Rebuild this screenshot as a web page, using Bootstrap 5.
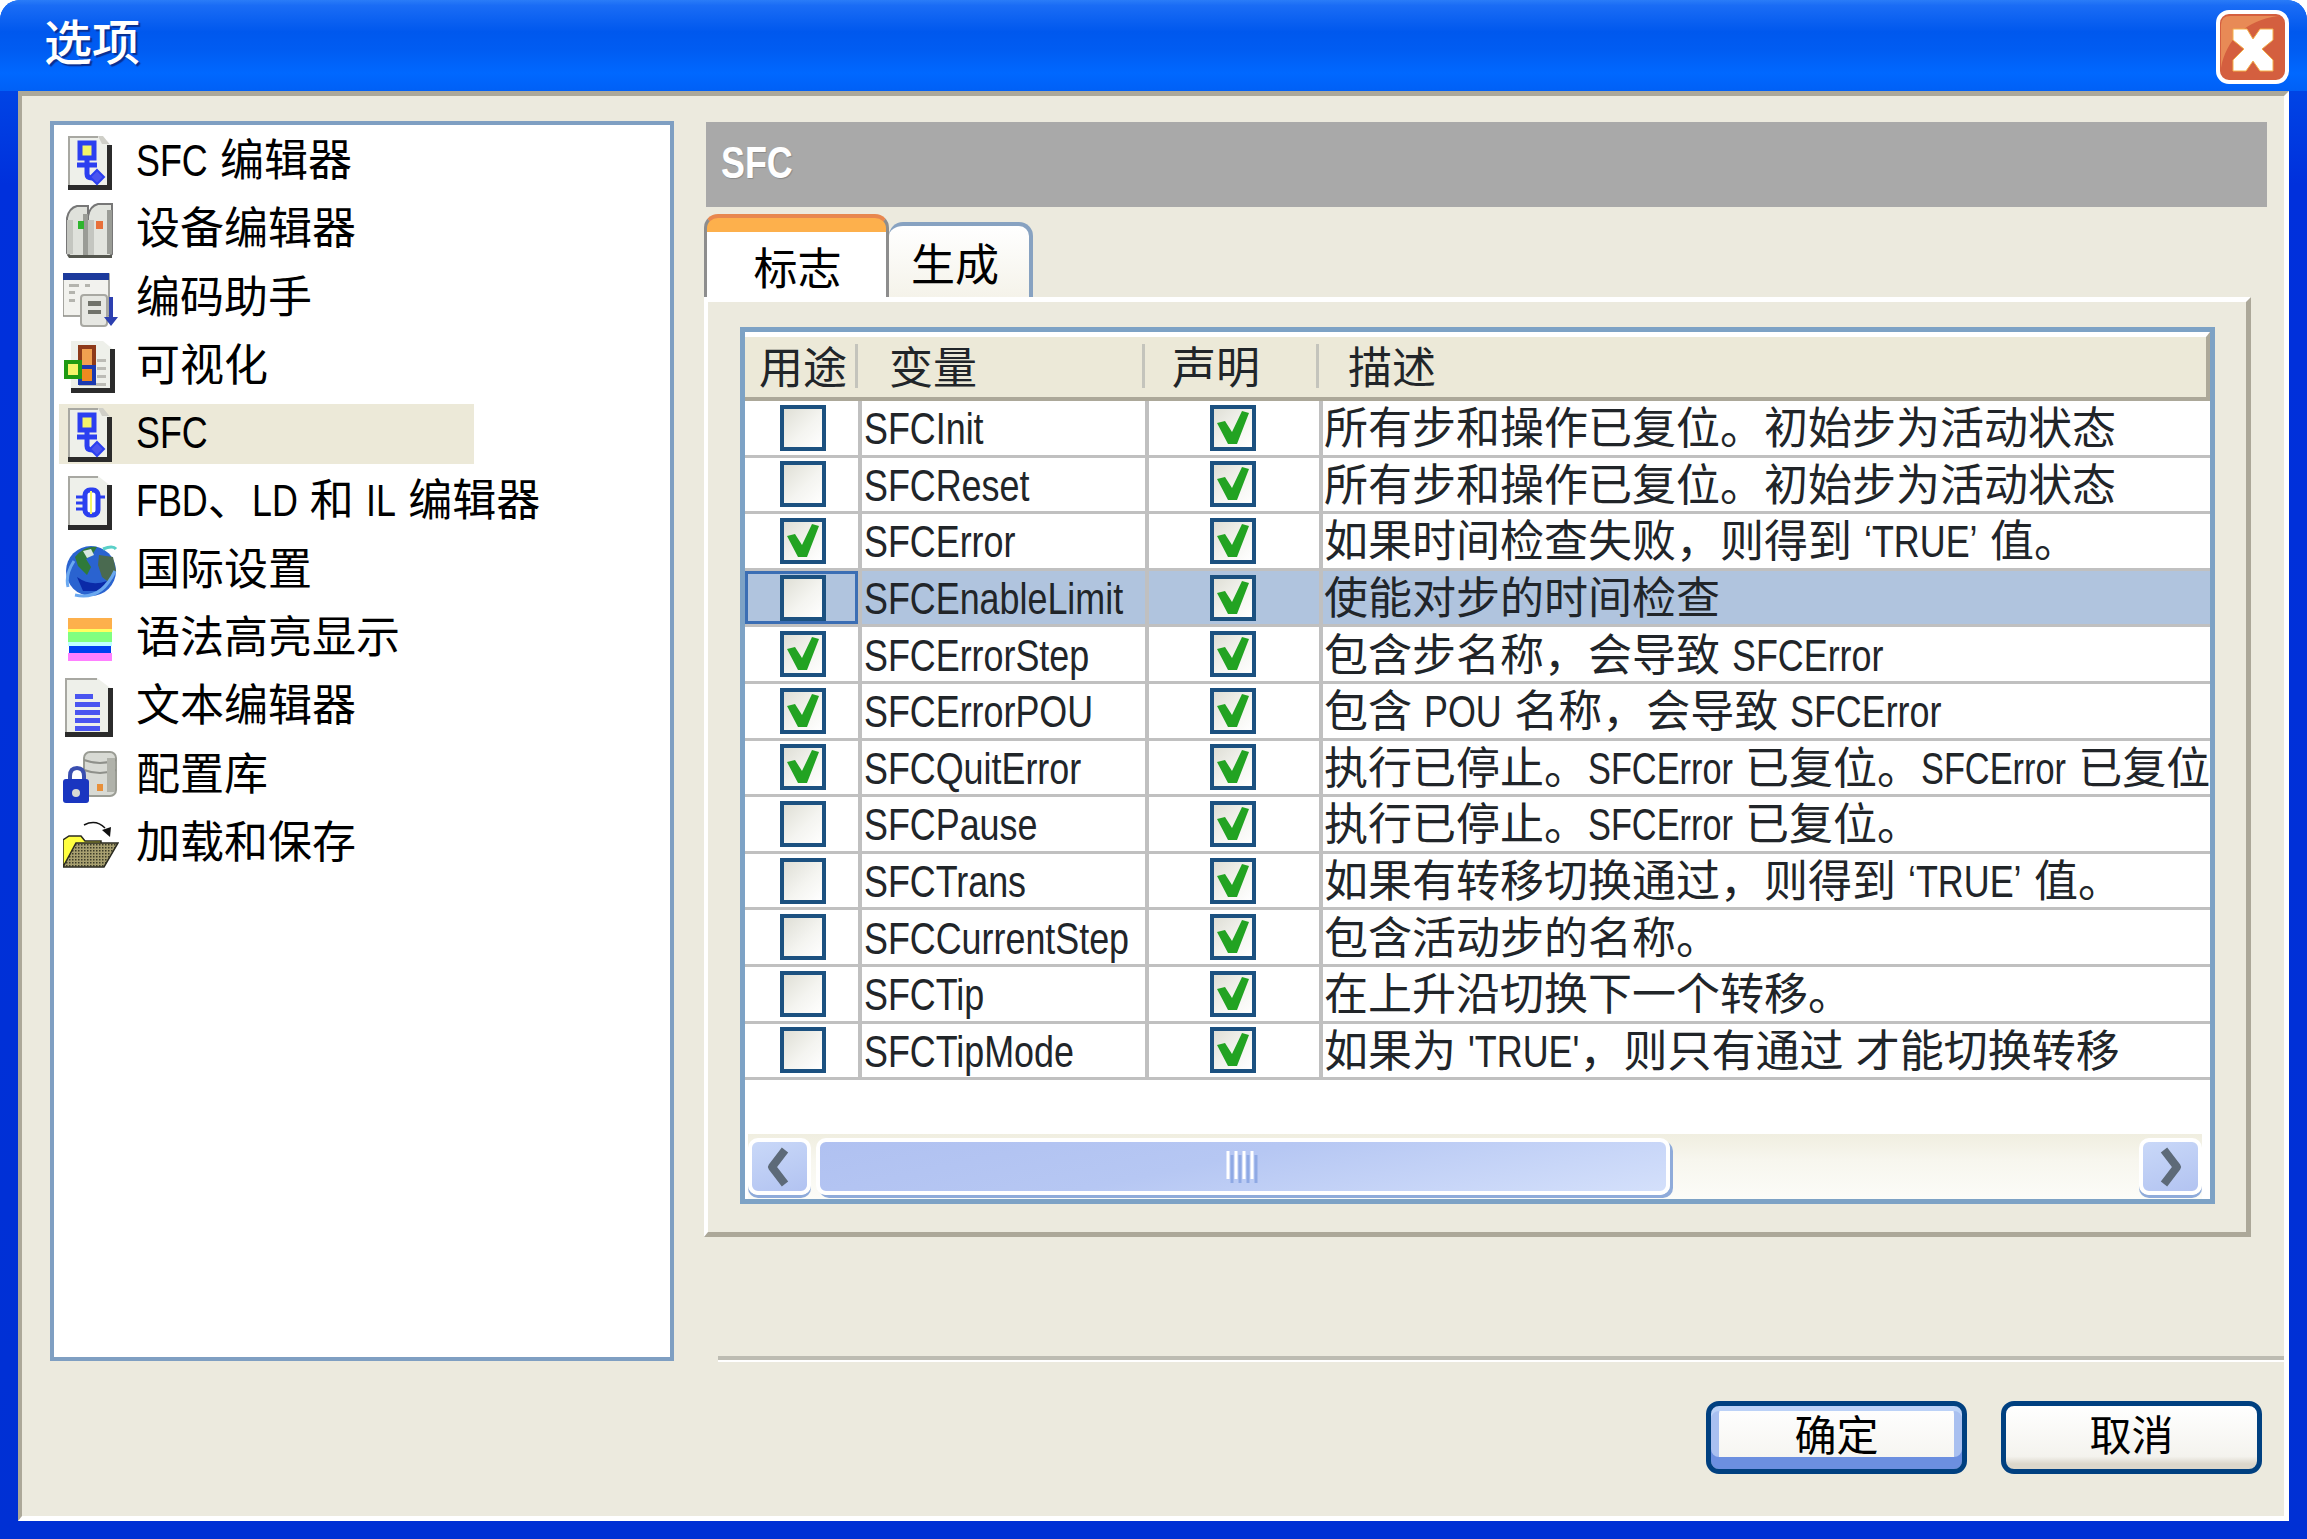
<!DOCTYPE html>
<html lang="zh-CN">
<head>
  <meta charset="UTF-8">
  <title>选项</title>
  <link href="https://cdn.jsdelivr.net/npm/bootstrap@5.3.3/dist/css/bootstrap.min.css" rel="stylesheet">
  <style>
    body {
      margin: 0;
      background: #fff;
      color: #000;
      font-family: "Liberation Sans", "Noto Sans CJK SC", sans-serif;
      font-size: 44px;
      line-height: 1;
    }

    /* latin in the reference is narrower than Arial, the script below closes the gap */
    .lat {
      display: inline-block;
      transform: scaleX(.815);
      transform-origin: 0 50%;
    }

    .lat-tight {
      transform: scaleX(.78);
    }

    .dlg {
      width: 2307px;
      height: 1539px;
      overflow: hidden;
      border-radius: 20px 20px 0 0;
      background: linear-gradient(180deg, #0058ee 0, #0030dc 12%, #0030d4 100%);
    }

    .dlg-title {
      height: 91px;
      padding: 0 18px 0 44px;
      background: linear-gradient(180deg, #2a7cf8 0, #1a6cf5 6%, #0058ee 35%, #005cf2 55%, #0068ff 80%, #0060f6 100%);
    }

    .dlg-title-text {
      padding-bottom: 3px;
      color: #fff;
      font-size: 48px;
      font-weight: 500;
      text-shadow: 2px 2px 1px #0a2f90;
    }

    .close-x {
      width: 73px;
      height: 74px;
      margin-top: 3px;
    }

    .dlg-client {
      height: 1430px;
      margin: 0 18px;
      padding: 25px 17px 0 28px;
      background: #eceade;
      border-style: solid;
      border-width: 5px 5px 5px 4px;
      border-color: #aca899 #fff #fff #aca899;
    }

    /* left tree */
    .opt-list {
      width: 624px;
      height: 1240px;
      flex-shrink: 0;
      padding: 7px 5px 0;
      background: #fff;
      border: 4px solid #7f9fc2;
      border-radius: 0;
    }

    .opt-item {
      width: 415px;
      height: 60px;
      margin-bottom: 8.3px;
      padding: 0 0 0 4px;
      gap: 17px;
      background: transparent;
      border: 0;
      border-radius: 0;
      color: #000;
      white-space: nowrap;
    }

    .opt-item.active {
      background: #ece9d8;
      color: #000;
    }

    .opt-label {
      padding-bottom: 2px;
    }

    .opt-ico {
      width: 56px;
      height: 60px;
      flex-shrink: 0;
    }

    /* right side */
    .opt-right {
      margin-left: 32px;
      min-width: 0;
    }

    .sect-head {
      height: 85px;
      margin: 1px 0 7px;
      padding: 0 0 4px 15px;
      background: #a9a9a9;
      color: #fff;
      font-weight: 700;
      text-shadow: 1px 1px 1px #8a8a8a;
    }

    .opt-tabs {
      height: 83px;
      margin-left: -2px;
      border: 0;
      gap: 0;
      align-items: flex-end;
    }

    .opt-tabs .nav-link {
      margin: 0;
      color: #000;
      border-radius: 14px 14px 0 0;
      display: flex;
      align-items: center;
      justify-content: center;
    }

    .opt-tabs .nav-link.active {
      width: 185px;
      height: 83px;
      padding: 24px 0 0 2px;
      background: linear-gradient(180deg, #fdb04c 0, #fdb04c 14px, #fff 14px);
      border-style: solid;
      border-width: 4px 3px 0;
      border-color: #e8874f #8d8d8d;
    }

    .opt-tabs .nav-link.idle {
      width: 144px;
      height: 75px;
      padding: 9px 8px 0 0;
      background: linear-gradient(180deg, #fff 0, #f5f3ea 100%);
      border: solid #87a2c1;
      border-width: 4px 4px 0 0;
    }

    .tab-body {
      width: 1547px;
      height: 940px;
      margin-left: -2px;
      padding: 25px 32px 33px 32px;
      background: #eceade;
      border-style: solid;
      border-width: 5px 5px 5px 4px;
      border-color: #fff #aca899 #aca899 #fff;
    }

    .var-grid {
      width: 1475px;
      height: 877px;
      background: #fff;
      border: 5px solid #7da2c5;
      overflow: hidden;
    }

    .var-table {
      width: 1465px;
      margin: 0;
      table-layout: fixed;
      border-collapse: separate;
      border-spacing: 0;
    }

    .var-table > thead > tr > th {
      position: relative;
      height: 69px;
      padding: 4px 0 0;
      background: #ece9d8;
      border-top: 5px solid #fff;
      border-bottom: 4px solid #aca899;
      font-weight: 400;
      line-height: 1;
      vertical-align: middle;
    }

    .var-table > thead > tr > th::after {
      content: "";
      position: absolute;
      top: 7px;
      bottom: 9px;
      right: 4px;
      width: 3px;
      background: #c4c4bc;
    }

    .var-table > thead > tr > th:last-child {
      border-right: 4px solid #aca899;
    }

    .var-table > thead > tr > th:last-child::after {
      display: none;
    }

    .var-table > tbody > tr > td {
      height: 56.6px;
      padding: 0;
      background: #fff;
      border-bottom: 3px solid #c0c0c0;
      border-right: 4px solid #c0c0c0;
      vertical-align: middle;
      white-space: nowrap;
      overflow: hidden;
      line-height: 1;
    }

    .var-table > tbody > tr > td:last-child {
      border-right: 0;
    }

    .var-table > tbody > tr.row-sel > td {
      background: #b0c4de;
    }

    .var-table > tbody > tr.row-sel > td.cell-focus {
      box-shadow: inset 0 0 0 3px #3b6eb4;
    }

    .col-a { width: 117px; }
    .col-b { width: 287px; }
    .col-c { width: 174px; }

    .var-table > thead > tr > th.pad-a { padding-left: 14px; }
    .var-table > thead > tr > th.pad-b { padding-left: 27px; }
    .var-table > thead > tr > th.pad-c { padding-left: 23px; }
    .var-table > thead > tr > th.pad-d { padding-left: 25px; }
    .var-table > tbody > tr > td.var-name { padding: 3px 0 0 2px; }
    .var-table > tbody > tr > td.var-desc { padding: 3px 0 0 1px; }

    .chk {
      display: block;
      width: 46px;
      height: 46px;
      margin: 0 auto 0 35px;
      background: linear-gradient(135deg, #dfdfd6 0, #f4f4f0 55%, #fff 100%);
      border: 4px solid #1c5180;
    }

    .chk svg {
      display: block;
      width: 38px;
      height: 38px;
    }

    .chk-decl {
      margin: 0 auto 0 61px;
    }

    /* scrollbar */
    .hscroll {
      height: 65px;
      margin: auto 8px 0 3px;
      padding-top: 4px;
      gap: 5px;
      background: linear-gradient(180deg, #f0eee0 0, #f7f6ee 40%, #fcfcf8 100%);
    }

    .hscroll-btn,
    .hscroll-thumb {
      height: 57px;
      background: linear-gradient(160deg, #c9d8f8 0, #b2c3f1 100%);
      border: 4px solid #fff;
      border-radius: 10px;
      box-shadow: 0 3px 0 #8fabda;
    }

    .hscroll-btn {
      width: 63px;
      flex-shrink: 0;
    }

    .hscroll-btn svg {
      width: 26px;
      height: 42px;
      margin-right: 4px;
    }

    .hscroll-btn-end svg {
      margin: 0;
    }

    .hscroll-thumb {
      width: 854px;
      background: linear-gradient(168deg, #b0c1f1 0, #b6c7f3 45%, #d4e0fb 100%);
      box-shadow: 3px 3px 0 #8fabda;
    }

    .hscroll-grip {
      width: 36px;
      height: 32px;
      margin-left: 2px;
    }

    .foot-line {
      height: 6px;
      margin: 119px -17px 0 12px;
      background: linear-gradient(180deg, #bdbcb2 0, #bdbcb2 4px, #fff 4px);
    }

    .foot-btns {
      margin-top: 39px;
      padding-right: 5px;
      gap: 34px;
    }

    .dlg-btn {
      width: 261px;
      height: 73px;
      padding: 0 0 2px;
      color: #000;
      font-size: 42px;
      line-height: 1;
      border: 5px solid #004080;
      border-radius: 13px;
      background: linear-gradient(180deg, #fff 0, #f4f3ee 80%, #dcd7cb 92%, #dcd7cb 100%);
    }

    .dlg-btn-def {
      background: linear-gradient(180deg, #fff 0, #f4f3ee 100%) padding-box;
      box-shadow: inset 0 5px 0 #bcd2f7, inset 0 -12px 0 #6c8fe0, inset 8px 0 0 #a9c0f0, inset -8px 0 0 #a9c0f0;
    }
  </style>
</head>
<body>

  <svg class="d-none" xmlns="http://www.w3.org/2000/svg">
    <symbol id="ico-sfc" viewBox="0 0 56 60">
      <path d="M5 4h30l14 11v43H5z" fill="#eef0ea"/>
      <path d="M5 4h30v2H7v48H5z" fill="#a8a8a2"/>
      <path d="M35 4l4 8h7l3 3-9-11z" fill="#cfcfc8"/>
      <path d="M44 13h5v45H5v-5h39z" fill="#2b2b2b"/>
      <rect x="17" y="11" width="14" height="15" fill="#f4f46a" stroke="#2b3ff0" stroke-width="5"/>
      <path d="M24 26v16q0 4 5 4h4M14 33h20" fill="none" stroke="#2b3ff0" stroke-width="5"/>
      <path d="M34 38l7 7-7 7-7-7z" fill="#4a55f0" stroke="#2b3ff0" stroke-width="2"/>
    </symbol>
    <symbol id="ico-check" viewBox="0 0 38 38">
      <path d="M3 14l8-2 7 11L28 2l7 2-12 31h-9z" fill="#22a322"/>
    </symbol>
  </svg>

  <div class="dlg">
    <div class="dlg-title d-flex align-items-center justify-content-between">
      <span class="dlg-title-text">选项</span>
      <svg class="close-x" viewBox="0 0 73 74">
        <rect x="2" y="2" width="69" height="70" rx="11" fill="#d45f3f" stroke="#fff" stroke-width="4"/>
        <path d="M5 58C10 30 30 10 62 6H14q-9 0-9 9z" fill="#e88a56"/>
        <path d="M17 19h14l6 10 7-10h13v11l-11 9 11 11v11H44l-7-10-7 10H17V50l11-11-11-9z" fill="#fff" stroke="#f5b04a" stroke-width="1"/>
      </svg>
    </div>

    <div class="dlg-client d-flex">
      <div class="list-group opt-list">
        <div class="list-group-item d-flex align-items-center opt-item">
          <svg class="opt-ico"><use href="#ico-sfc"/></svg><span class="opt-label"><span class="lat">SFC</span> 编辑器</span>
        </div>
        <div class="list-group-item d-flex align-items-center opt-item">
          <svg class="opt-ico" viewBox="0 0 56 60">
            <path d="M4 18q2-10 10-12h11v50H7l-3-3z" fill="#dfe1db" stroke="#777" stroke-width="2"/>
            <path d="M25 16q2-10 10-12h14v50l-3 3H25z" fill="#e2e4de" stroke="#777" stroke-width="2"/>
            <path d="M4 20h6v34H4zM25 20h6v36h-6z" fill="#c4c6c0"/>
            <path d="M44 10h5v44h-5zM20 14h5v42h-5z" fill="#9a9c96"/>
            <rect x="15" y="21" width="6" height="8" fill="#2fb52f"/>
            <rect x="33" y="21" width="7" height="8" fill="#e8703a"/>
            <path d="M4 55h45v3H6z" fill="#55574f"/>
          </svg><span class="opt-label">设备编辑器</span>
        </div>
        <div class="list-group-item d-flex align-items-center opt-item">
          <svg class="opt-ico" viewBox="0 0 56 60">
            <rect x="0" y="5" width="46" height="42" fill="#f2f2ee" stroke="#8c8c86" stroke-width="1.5"/>
            <rect x="0" y="4" width="46" height="7" fill="#1c3a9c"/>
            <path d="M6 15h10v3H6zM22 15h5v3h-5zM6 22h6v3H6zM6 30h6v3H6z" fill="#b4b4ae"/>
            <rect x="18" y="26" width="26" height="31" rx="3" fill="#e6e7e2" stroke="#a8a8a2" stroke-width="2"/>
            <path d="M25 32h13v5H25zM25 41h13v4H25z" fill="#70726a"/>
            <path d="M46 28h4v20h5l-7 9-7-9h5z" fill="#2c3fb0"/>
          </svg><span class="opt-label">编码助手</span>
        </div>
        <div class="list-group-item d-flex align-items-center opt-item">
          <svg class="opt-ico" viewBox="0 0 56 60">
            <path d="M8 4h32l12 10v42H8z" fill="#eef0ea"/>
            <path d="M47 12h5v44H8v-5h39z" fill="#2b2b2b"/>
            <path d="M34 22h9v3h-9zM34 30h9v3h-9zM34 38h9v3h-9zM16 46h27v3H16z" fill="#bcbcb6"/>
            <rect x="17" y="10" width="14" height="20" fill="#f0a050" stroke="#8e3a1a" stroke-width="4"/>
            <rect x="17" y="30" width="14" height="16" fill="#f08a20" stroke="#1c3ab0" stroke-width="4"/>
            <rect x="3" y="25" width="14" height="15" fill="#f4f46a" stroke="#1f9a12" stroke-width="4"/>
          </svg><span class="opt-label">可视化</span>
        </div>
        <div class="list-group-item d-flex align-items-center opt-item active">
          <svg class="opt-ico"><use href="#ico-sfc"/></svg><span class="opt-label"><span class="lat">SFC</span></span>
        </div>
        <div class="list-group-item d-flex align-items-center opt-item">
          <svg class="opt-ico" viewBox="0 0 56 60">
            <path d="M5 4h30l14 11v43H5z" fill="#eef0ea"/>
            <path d="M5 4h30v2H7v48H5z" fill="#a8a8a2"/>
            <path d="M44 13h5v45H5v-5h39z" fill="#2b2b2b"/>
            <rect x="22" y="18" width="13" height="25" rx="5" fill="#fff" stroke="#2b3ff0" stroke-width="5"/>
            <path d="M28 19v23" stroke="#f4f46a" stroke-width="2"/>
            <path d="M13 25h8M13 31h8M13 37h8M36 25h6" stroke="#2b3ff0" stroke-width="3"/>
          </svg><span class="opt-label"><span class="lat">FBD</span>、<span class="lat">LD</span> 和 <span class="lat">IL</span> 编辑器</span>
        </div>
        <div class="list-group-item d-flex align-items-center opt-item">
          <svg class="opt-ico" viewBox="0 0 56 60">
            <circle cx="28" cy="30" r="25" fill="#2a63d0"/>
            <path d="M12 16q10-12 22-10l-5 8-6 4 5 8-4 8-9-9z" fill="#2f7a3a"/>
            <path d="M20 10l8-2 3 6-7 3z" fill="#d8e8e0"/>
            <path d="M36 14l14 2 3 14-6 12-8-6-4-12z" fill="#4a6a50"/>
            <path d="M14 36q14 10 30 4l-8 10H20z" fill="#0a2aa8"/>
            <path d="M5 46q-3-12 6-26M12 54q26 6 40-24" fill="none" stroke="#6aa8f0" stroke-width="3"/>
            <path d="M40 8q10-4 13 0" fill="none" stroke="#5ad0c8" stroke-width="3"/>
          </svg><span class="opt-label">国际设置</span>
        </div>
        <div class="list-group-item d-flex align-items-center opt-item">
          <svg class="opt-ico" viewBox="0 0 56 60">
            <rect x="5" y="9" width="44" height="11" fill="#fdb04c"/>
            <rect x="5" y="20" width="44" height="3" fill="#ffff60"/>
            <rect x="5" y="23" width="44" height="10" fill="#80ff80"/>
            <rect x="5" y="33" width="44" height="4" fill="#c0ffff"/>
            <rect x="6" y="37" width="42" height="7" fill="#0040f0"/>
            <rect x="5" y="44" width="44" height="8" fill="#ff80ff"/>
          </svg><span class="opt-label">语法高亮显示</span>
        </div>
        <div class="list-group-item d-flex align-items-center opt-item">
          <svg class="opt-ico" viewBox="0 0 56 60">
            <path d="M2 1h32l16 12v47H2z" fill="#eef0ea"/>
            <path d="M2 1h32v2H4v52H2z" fill="#a8a8a2"/>
            <path d="M45 11h5v49H2v-5h43z" fill="#2b2b2b"/>
            <path d="M12 17h18v5H12zM12 25h25v5H12zM12 33h25v5H12zM12 41h25v5H12zM12 49h25v5H12z" fill="#4a55f0"/>
          </svg><span class="opt-label">文本编辑器</span>
        </div>
        <div class="list-group-item d-flex align-items-center opt-item">
          <svg class="opt-ico" viewBox="0 0 56 60">
            <rect x="21" y="6" width="32" height="44" rx="6" fill="#d8dad4" stroke="#9a9c94" stroke-width="2"/>
            <path d="M21 14q16 6 32 0M21 24q16 6 32 0" fill="none" stroke="#8e908a" stroke-width="2"/>
            <path d="M44 12h8v34h-8z" fill="#b0b2aa"/>
            <rect x="34" y="38" width="6" height="7" fill="#e8903a"/>
            <path d="M7 34v-4q0-8 7-8t7 8v4" fill="none" stroke="#3a4fb0" stroke-width="4"/>
            <rect x="0" y="33" width="26" height="24" rx="3" fill="#1a36c0"/>
            <circle cx="13" cy="47" r="4" fill="#d8dad4"/>
          </svg><span class="opt-label">配置库</span>
        </div>
        <div class="list-group-item d-flex align-items-center opt-item">
          <svg class="opt-ico" viewBox="0 0 56 60">
            <defs>
              <pattern id="foldDots" width="3" height="3" patternUnits="userSpaceOnUse">
                <rect width="3" height="3" fill="#a8a070"/>
                <rect width="1.5" height="1.5" fill="#3c3c28"/>
              </pattern>
            </defs>
            <path d="M0 26l6-4h12l4 5h16v12H12L0 52z" fill="#ffff40" stroke="#2b2b20" stroke-width="1.5"/>
            <path d="M0 53l13-24h42L41 53z" fill="url(#foldDots)" stroke="#2b2b20" stroke-width="1.5"/>
            <path d="M21 11q12-6 21 3" fill="none" stroke="#111" stroke-width="1.5"/>
            <path d="M47 23l-8-7 9-3z" fill="#111"/>
          </svg><span class="opt-label">加载和保存</span>
        </div>
      </div>

      <div class="opt-right flex-grow-1 d-flex flex-column">
        <div class="sect-head d-flex align-items-center"><span class="lat">SFC</span></div>

        <ul class="nav nav-tabs opt-tabs">
          <li class="nav-item"><a class="nav-link active" href="#">标志</a></li>
          <li class="nav-item"><a class="nav-link idle" href="#">生成</a></li>
        </ul>

        <div class="tab-body">
          <div class="var-grid d-flex flex-column">
            <table class="table var-table">
              <colgroup><col class="col-a"><col class="col-b"><col class="col-c"><col></colgroup>
              <thead>
                <tr>
                  <th class="pad-a">用途</th>
                  <th class="pad-b">变量</th>
                  <th class="pad-c">声明</th>
                  <th class="pad-d">描述</th>
                </tr>
              </thead>
              <tbody>
                <tr><td><span class="chk"></span></td><td class="var-name"><span class="lat">SFCInit</span></td><td><span class="chk chk-decl"><svg><use href="#ico-check"/></svg></span></td><td class="var-desc">所有步和操作已复位。初始步为活动状态</td></tr>
                <tr><td><span class="chk"></span></td><td class="var-name"><span class="lat">SFCReset</span></td><td><span class="chk chk-decl"><svg><use href="#ico-check"/></svg></span></td><td class="var-desc">所有步和操作已复位。初始步为活动状态</td></tr>
                <tr><td><span class="chk"><svg><use href="#ico-check"/></svg></span></td><td class="var-name"><span class="lat">SFCError</span></td><td><span class="chk chk-decl"><svg><use href="#ico-check"/></svg></span></td><td class="var-desc">如果时间检查失败，则得到 <span class="lat">‘TRUE’</span> 值。</td></tr>
                <tr class="row-sel"><td class="cell-focus"><span class="chk"></span></td><td class="var-name"><span class="lat">SFCEnableLimit</span></td><td><span class="chk chk-decl"><svg><use href="#ico-check"/></svg></span></td><td class="var-desc">使能对步的时间检查</td></tr>
                <tr><td><span class="chk"><svg><use href="#ico-check"/></svg></span></td><td class="var-name"><span class="lat">SFCErrorStep</span></td><td><span class="chk chk-decl"><svg><use href="#ico-check"/></svg></span></td><td class="var-desc">包含步名称，会导致 <span class="lat">SFCError</span></td></tr>
                <tr><td><span class="chk"><svg><use href="#ico-check"/></svg></span></td><td class="var-name"><span class="lat">SFCErrorPOU</span></td><td><span class="chk chk-decl"><svg><use href="#ico-check"/></svg></span></td><td class="var-desc">包含 <span class="lat">POU</span> 名称，会导致 <span class="lat">SFCError</span></td></tr>
                <tr><td><span class="chk"><svg><use href="#ico-check"/></svg></span></td><td class="var-name"><span class="lat">SFCQuitError</span></td><td><span class="chk chk-decl"><svg><use href="#ico-check"/></svg></span></td><td class="var-desc">执行已停止。<span class="lat lat-tight">SFCError</span> 已复位。<span class="lat lat-tight">SFCError</span> 已复位</td></tr>
                <tr><td><span class="chk"></span></td><td class="var-name"><span class="lat">SFCPause</span></td><td><span class="chk chk-decl"><svg><use href="#ico-check"/></svg></span></td><td class="var-desc">执行已停止。<span class="lat lat-tight">SFCError</span> 已复位。</td></tr>
                <tr><td><span class="chk"></span></td><td class="var-name"><span class="lat">SFCTrans</span></td><td><span class="chk chk-decl"><svg><use href="#ico-check"/></svg></span></td><td class="var-desc">如果有转移切换通过，则得到 <span class="lat">‘TRUE’</span> 值。</td></tr>
                <tr><td><span class="chk"></span></td><td class="var-name"><span class="lat">SFCCurrentStep</span></td><td><span class="chk chk-decl"><svg><use href="#ico-check"/></svg></span></td><td class="var-desc">包含活动步的名称。</td></tr>
                <tr><td><span class="chk"></span></td><td class="var-name"><span class="lat">SFCTip</span></td><td><span class="chk chk-decl"><svg><use href="#ico-check"/></svg></span></td><td class="var-desc">在上升沿切换下一个转移。</td></tr>
                <tr><td><span class="chk"></span></td><td class="var-name"><span class="lat">SFCTipMode</span></td><td><span class="chk chk-decl"><svg><use href="#ico-check"/></svg></span></td><td class="var-desc">如果为 <span class="lat">'TRUE'</span>，则只有通过 才能切换转移</td></tr>
              </tbody>
            </table>

            <div class="hscroll d-flex">
              <div class="hscroll-btn d-flex align-items-center justify-content-center">
                <svg viewBox="0 0 26 42"><path d="M20 4L7 21l13 17" fill="none" stroke="#5d6a78" stroke-width="8" stroke-linejoin="round"/></svg>
              </div>
              <div class="hscroll-thumb d-flex align-items-center justify-content-center">
                <svg class="hscroll-grip" viewBox="0 0 36 32">
                  <path d="M2 0v28M10 0v28M18 0v28M26 0v28" stroke="#fff" stroke-width="3"/>
                  <path d="M6 4v28M14 4v28M22 4v28M30 4v28" stroke="#8fa9e4" stroke-width="3"/>
                </svg>
              </div>
              <div class="flex-grow-1"></div>
              <div class="hscroll-btn hscroll-btn-end d-flex align-items-center justify-content-center">
                <svg viewBox="0 0 26 42"><path d="M6 4l13 17L6 38" fill="none" stroke="#5d6a78" stroke-width="8" stroke-linejoin="round"/></svg>
              </div>
            </div>
          </div>
        </div>

        <div class="foot-line"></div>
        <div class="foot-btns d-flex justify-content-end">
          <button type="button" class="btn dlg-btn dlg-btn-def">确定</button>
          <button type="button" class="btn dlg-btn">取消</button>
        </div>
      </div>
    </div>
  </div>

  <script src="https://cdn.jsdelivr.net/npm/bootstrap@5.3.3/dist/js/bootstrap.bundle.min.js"></script>
  <script>
    // scaleX leaves the layout box at full width, take the difference back
    document.querySelectorAll(".lat").forEach(function (el) {
      var scale = el.classList.contains("lat-tight") ? 0.78 : 0.815;
      el.style.marginRight = (el.offsetWidth * (scale - 1)) + "px";
    });
  </script>
</body>
</html>
